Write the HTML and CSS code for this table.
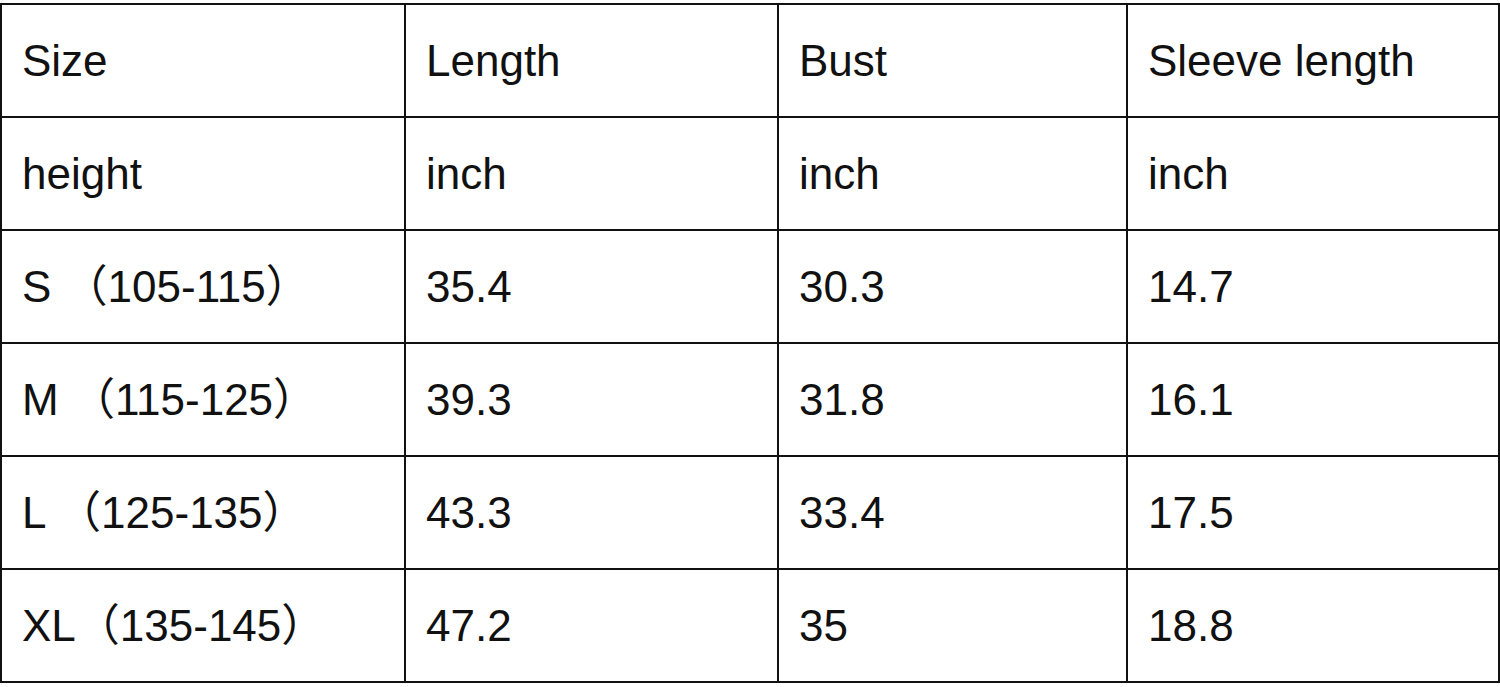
FILE: index.html
```html
<!DOCTYPE html>
<html>
<head>
<meta charset="utf-8">
<link rel="stylesheet" href="styles.css">
</head>
<body>
<table class="size-table">
  <colgroup>
    <col class="c1"><col class="c2"><col class="c3"><col class="c4">
  </colgroup>
  <tr><td>Size</td><td>Length</td><td>Bust</td><td>Sleeve length</td></tr>
  <tr><td>height</td><td>inch</td><td>inch</td><td>inch</td></tr>
  <tr><td>S （105-115）</td><td>35.4</td><td>30.3</td><td>14.7</td></tr>
  <tr><td>M （115-125）</td><td>39.3</td><td>31.8</td><td>16.1</td></tr>
  <tr><td>L （125-135）</td><td>43.3</td><td>33.4</td><td>17.5</td></tr>
  <tr><td>XL（135-145）</td><td>47.2</td><td>35</td><td>18.8</td></tr>
</table>
</body>
</html>
```
FILE: styles.css
```css
html, body {
  margin: 0;
  padding: 0;
  background: #fff;
}
body {
  padding: 3px 0 0 0;
}
.size-table {
  border-collapse: collapse;
  table-layout: fixed;
  width: 1498px;
  font-family: "Liberation Sans", "Noto Sans CJK SC", Arial, sans-serif;
  font-size: 44px;
  color: #111;
}
.c1 { width: 404px; }
.c2 { width: 373px; }
.c3 { width: 349px; }
.c4 { width: 372px; }
.size-table td {
  border: 2px solid #111;
  height: 111px;
  padding: 0 0 0 20px;
  vertical-align: middle;
  white-space: nowrap;
  line-height: 1;
}
```
